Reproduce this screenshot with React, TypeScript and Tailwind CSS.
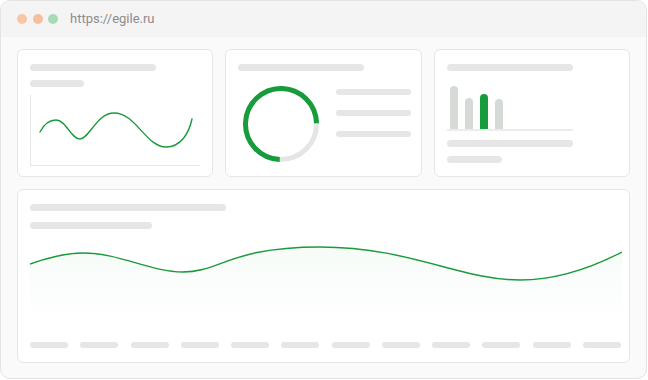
import React from "react";

const Bar = ({ w, h = "h-[7px]" }: { w: string; h?: string }) => (
  <div className={`${w} ${h} rounded-full bg-[#e6e6e6]`} />
);

function LineCard() {
  return (
    <div className="bg-white border border-[#e6e6e6] rounded-[6px] pl-[12px] pt-[14px] h-[128px]">
      <Bar w="w-[126px]" />
      <div className="mt-[9px]">
        <Bar w="w-[54px]" />
      </div>
      <div className="mt-[8px] w-[170px] h-[71px] border-l border-b border-[#e5e5e5]">
        <svg width="170" height="70" viewBox="0 0 170 70" fill="none">
          <path
            d="M9,37 C13,29 19,25 25,25 C35,25 40,44 49,44 C58,44 66,18 83,18 C105,18 115,52 135,52 C150,52 158,38 161,24"
            stroke="#1b9a3c"
            strokeWidth="1.4"
            strokeLinecap="round"
          />
        </svg>
      </div>
    </div>
  );
}

function DonutCard() {
  const r = 35.5;
  const c = 2 * Math.PI * r;
  return (
    <div className="bg-white border border-[#e6e6e6] rounded-[6px] pl-[12px] pt-[14px] h-[128px]">
      <Bar w="w-[126px]" />
      <div className="flex items-start mt-[13px]">
        <svg width="80" height="80" viewBox="0 0 80 80" className="ml-[3px]">
          <circle cx="40" cy="40" r={r} fill="none" stroke="#e5e5e5" strokeWidth="5" />
          <circle
            cx="40"
            cy="40"
            r={r}
            fill="none"
            stroke="#179c3c"
            strokeWidth="5"
            strokeDasharray={`${c * 0.74} ${c}`}
            transform="rotate(92 40 40)"
          />
        </svg>
        <div className="ml-[15px] pt-[5px] flex flex-col gap-[15px]">
          <Bar w="w-[75px]" h="h-[6px]" />
          <Bar w="w-[75px]" h="h-[6px]" />
          <Bar w="w-[75px]" h="h-[6px]" />
        </div>
      </div>
    </div>
  );
}

function BarsCard() {
  const bars = [
    { h: "h-[43px]", c: "bg-[#d5dad7]" },
    { h: "h-[31px]", c: "bg-[#d5dad7]" },
    { h: "h-[35px]", c: "bg-[#179c3c]" },
    { h: "h-[30px]", c: "bg-[#d5dad7]" },
  ];
  return (
    <div className="bg-white border border-[#e6e6e6] rounded-[6px] pl-[12px] pt-[14px] h-[128px]">
      <Bar w="w-[126px]" />
      <div className="mt-[16px] w-[126px] h-[44px] flex items-end gap-[7px] pl-[3px] border-b-2 border-[#ececec]">
        {bars.map((b, i) => (
          <div key={i} className={`w-[8px] ${b.h} ${b.c} rounded-t-full`} />
        ))}
      </div>
      <div className="mt-[9px]">
        <Bar w="w-[126px]" />
      </div>
      <div className="mt-[9px]">
        <Bar w="w-[55px]" />
      </div>
    </div>
  );
}

function WaveCard() {
  const line =
    "M0,28 C20,21 38,17 53,17 C90,17 120,36 153,36 C190,36 200,11 290,11 C380,11 430,44 490,44 C530,44 565,30 592,16";
  return (
    <div className="bg-white border border-[#e6e6e6] rounded-[6px] pl-[12px] pr-[8px] pt-[14px] h-[174px]">
      <Bar w="w-[196px]" />
      <div className="mt-[11px]">
        <Bar w="w-[122px]" />
      </div>
      <svg width="592" height="90" viewBox="0 0 592 90" fill="none" className="mt-[7px] block">
        <defs>
          <linearGradient id="fade" x1="0" y1="0" x2="0" y2="1">
            <stop offset="0" stopColor="#179c3c" stopOpacity="0.035" />
            <stop offset="1" stopColor="#179c3c" stopOpacity="0" />
          </linearGradient>
        </defs>
        <path d={`${line} L592,90 L0,90 Z`} fill="url(#fade)" />
        <path d={line} stroke="#1b9a3c" strokeWidth="1.4" />
      </svg>
      <div className="mt-[16px] flex justify-between w-[591px]">
        {Array.from({ length: 12 }).map((_, i) => (
          <div key={i} className="w-[38px] h-[6px] rounded-full bg-[#e6e6e6]" />
        ))}
      </div>
    </div>
  );
}

export default function App() {
  return (
    <div className="w-[648px] h-[380px] bg-white">
      <div className="w-[647px] h-[379px] bg-[#fafafa] border border-[#e4e4e4] rounded-[10px] overflow-hidden flex flex-col">
        <div className="h-[36px] bg-[#f4f4f4] flex items-center pl-[16px] shrink-0">
          <div className="w-[10px] h-[10px] rounded-full bg-[#f8c6a7]" />
          <div className="w-[10px] h-[10px] rounded-full bg-[#f5bf9e] ml-[6px]" />
          <div className="w-[10px] h-[10px] rounded-full bg-[#a6dbb5] ml-[5px]" />
          <span
            className="ml-[12px] text-[13px] text-[#8c8c8c]"
            style={{ fontFamily: "Roboto, 'Liberation Sans', sans-serif" }}
          >
            https://egile.ru
          </span>
        </div>
        <div className="flex-1 pl-[16px] pr-[16px] pt-[12px]">
          <div className="grid grid-cols-3 gap-[12px]">
            <LineCard />
            <DonutCard />
            <BarsCard />
          </div>
          <div className="mt-[12px]">
            <WaveCard />
          </div>
        </div>
      </div>
    </div>
  );
}
